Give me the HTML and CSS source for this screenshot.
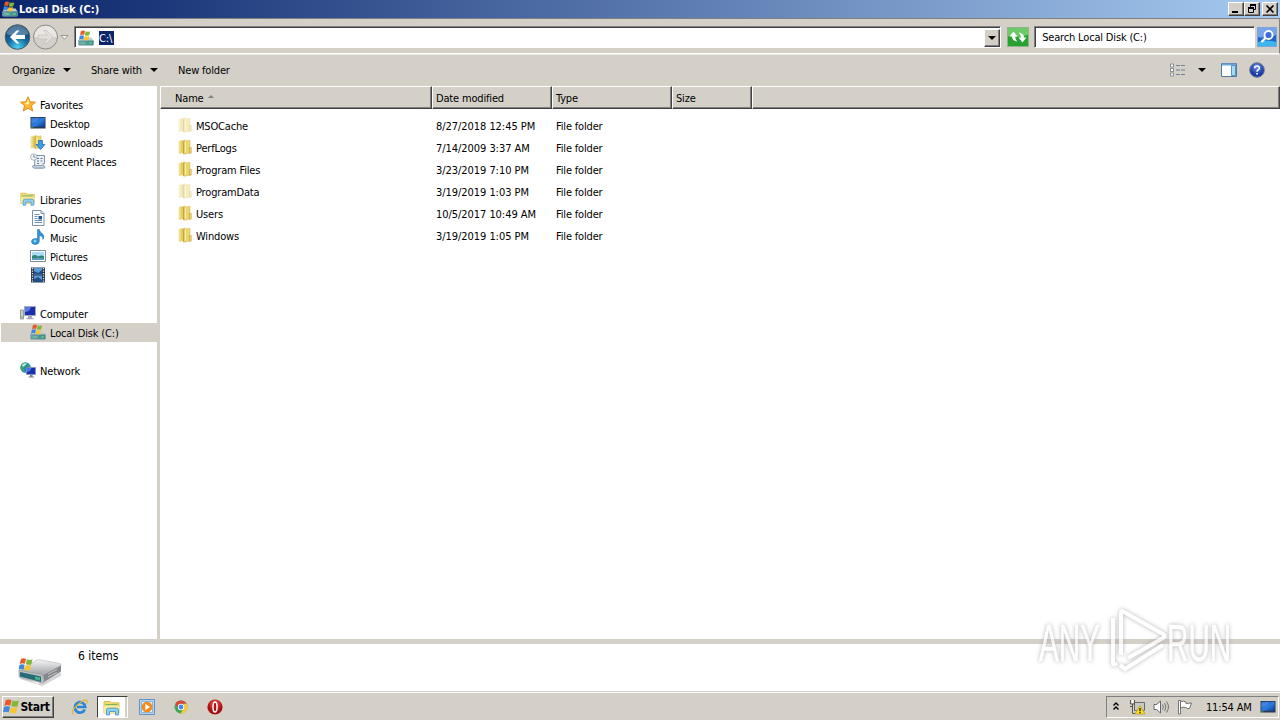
FILE: index.html
```html
<!DOCTYPE html>
<html lang="en">
<head>
    <meta charset="utf-8">
    <title>Local Disk (C:)</title>
    <link rel="stylesheet" href="styles.css">
</head>
<body>
    <svg class="defs" width="0" height="0">
        <defs>
            <linearGradient id="gold" x2="1"><stop offset="0" stop-color="#fbf3b0"/><stop offset=".45" stop-color="#e2c858"/><stop offset="1" stop-color="#f3e084"/></linearGradient>
            <linearGradient id="screen" x2="1" y2="1"><stop offset="0" stop-color="#0b3fa8"/><stop offset=".5" stop-color="#2f7fe0"/><stop offset="1" stop-color="#0a3a94"/></linearGradient>
            <linearGradient id="teal" x2="1"><stop offset="0" stop-color="#6a9fb0"/><stop offset="1" stop-color="#3a8f80"/></linearGradient>
            <linearGradient id="metal" y2="1" x2="0"><stop offset="0" stop-color="#f6f6f6"/><stop offset="1" stop-color="#a0a2a4"/></linearGradient>
            <radialGradient id="blueBall" cy=".95" r=".9"><stop offset="0" stop-color="#4fd8f4"/><stop offset=".5" stop-color="#12689f"/><stop offset="1" stop-color="#0c3e6c"/></radialGradient>
            <radialGradient id="helpBall" cy=".3"><stop offset="0" stop-color="#6b96ea"/><stop offset="1" stop-color="#1c3aa4"/></radialGradient>
            <radialGradient id="redBall" cy=".3"><stop offset="0" stop-color="#f05a4c"/><stop offset="1" stop-color="#a80c10"/></radialGradient>
        </defs>
        <symbol id="flag" viewBox="0 0 16 16">
            <path d="M2.600 2.200Q5 .6 8 2L6.800 7.300Q4.200 6 1.300 7.400z" fill="#e8592a"/>
            <path d="M8.900 2.400Q12 3.800 15 2.300L13.700 7.700Q11 9 7.800 7.600z" fill="#7fb93a"/>
            <path d="M1.100 8.300Q4 7 6.600 8.300L5.400 13.400Q3 12.200 0 13.500z" fill="#3f86dc"/>
            <path d="M7.500 8.600Q10.500 10 13.500 8.600L12.200 13.900Q9.500 15 6.300 13.600z" fill="#f8c52c"/>
        </symbol>
        <symbol id="drive" viewBox="0 0 16 16">
            <path d="M.5 10.500l2-3h11l2 3z" fill="#c3cdd0"/>
            <path d="M.5 10.500h15v4q0 .8-.8.8H1.300q-.8 0-.8-.8z" fill="url(#teal)" stroke="#7f9fa8" stroke-width=".6"/>
            <path d="M11 13h3M2.500 13h5" stroke="#79d99a"/>
            <use href="#flag" x="1" y="-.5" width="12" height="12"/>
        </symbol>
        <symbol id="folder" viewBox="0 0 14 16">
            <path d="M1 2.500L7 .8v12.500L1 14.500z" fill="url(#gold)" stroke="#dcc468" stroke-width=".5"/>
            <path d="M6 2l6-.5V14l-6 1.300z" fill="#ecd570" stroke="#d0b54a" stroke-width=".5"/>
            <path d="M5.500 2.200v13" stroke="#c4a440"/>
            <path d="M7.500 2.500v11" stroke="#fbf2a8"/>
            <path d="M11.500 8.500h1.800V14l-1.800.5z" fill="#f0db80" stroke="#b8952e" stroke-width=".5"/>
        </symbol>
        <symbol id="monitor" viewBox="0 0 16 14">
            <path d="M.5 1h15v11.500H.5z" fill="#29394f"/>
            <path d="M1.300 1.800h13.400v9H1.300z" fill="url(#screen)"/>
            <path d="M1.300 2l8-.2Q7 7 1.300 7z" fill="#5ba0ee" opacity=".55"/>
            <path d="M1 12h2.500" stroke="#58b848"/>
        </symbol>
        <symbol id="library" viewBox="0 0 18 16">
            <path d="M1 3V1.500h6l1.500 1.300H16V13H1z" fill="#f2dd72" stroke="#d0b040" stroke-width=".8"/>
            <path d="M2.500 4.500h12" stroke="#6fb56c"/>
            <path d="M1 6h15.500v7H1z" fill="#f8eaa0"/>
            <path d="M3.500 15V10Q3.500 8.200 5.500 8.200h8Q15.500 8.200 15.500 10v5h-3v-3.500h-6V15z" fill="#8fd0ef" stroke="#3f91c4" stroke-width=".8"/>
        </symbol>
    </svg>

    <header class="titlebar">
        <svg class="i16" viewBox="0 0 16 16"><use href="#drive"/></svg>
        <h1>Local Disk (C:)</h1>
        <div class="window-buttons">
            <button class="btn3d"><svg viewBox="0 0 14 12"><path d="M3 8h6v2H3z"/></svg></button>
            <button class="btn3d"><svg viewBox="0 0 14 12"><path d="M5 1h6v2H5zM3 4h6v2H3z"/><path d="M5.500 4V1.500h5v5H9M3.500 4.500h5v5h-5z" fill="none" stroke="#000"/></svg></button>
            <button class="btn3d close"><svg viewBox="0 0 14 12"><path d="M3.500 2.500l7 7M10.500 2.500l-7 7" stroke="#000" stroke-width="1.700"/></svg></button>
        </div>
    </header>

    <nav class="addressbar">
        <svg class="nav-buttons" width="70" height="28" viewBox="0 0 70 28">
            <circle cx="17.500" cy="14" r="12.300" fill="url(#blueBall)" stroke="#4b5f6c"/>
            <path d="M6.500 11a11.300 11.300 0 0 1 22 0Q17 15 6.500 11z" fill="#fff" opacity=".28"/>
            <path d="M10 14l6.500-6.500h3L15.500 12H25v4h-9.500l4 4.500h-3z" fill="#fff"/>
            <circle cx="45.500" cy="14" r="12" fill="#d3d0cb" stroke="#8e8c89"/>
            <path d="M34.500 14a11 11 0 0 1 22 0z" fill="#e9e7e4"/>
            <path d="M53 14l-6.500-6.500h-3l4 4.500H38v4h9.500l-4 4.500h3z" fill="#e2dfdb" stroke="#c0bdb8" stroke-width=".6"/>
            <path d="M61 12.500h7l-3.500 3.800z" fill="#f7f5f2" stroke="#88857f" stroke-width=".8"/>
        </svg>
        <div class="field path">
            <svg class="i16" viewBox="0 0 16 16"><use href="#drive"/></svg>
            <span class="selected">C:\</span>
            <button class="btn3d dropdown"><i class="caret"></i></button>
        </div>
        <svg class="refresh" width="22" height="20" viewBox="0 0 22 20">
            <path d="M.5.5h21v19H.5z" fill="#27a12f" stroke="#8fb48c"/>
            <path d="M1 1h20v7Q11 11 1 9z" fill="#6ccb66"/>
            <path d="M2.500 9.500L6.500 4.500l4 5H8.200q0 3 2 5-5-.7-5.200-5z" fill="#fff"/>
            <path d="M19.500 10.500l-4 5-4-5h2.300q0-3-2-5 5 .7 5.200 5z" fill="#fff"/>
        </svg>
        <div class="field search">Search Local Disk (C:)</div>
        <svg class="find" width="20" height="20" viewBox="0 0 20 20">
            <path d="M.5.5h19v19H.5z" fill="#2064cf" stroke="#7da4da"/>
            <path d="M1 1h18v7Q10 12 1 10z" fill="#76a3ea"/>
            <path d="M1 15q9-3 18 0v4H1z" fill="#3cb7ee"/>
            <circle cx="11.500" cy="8" r="4" fill="#3a6fd8" stroke="#fff" stroke-width="1.800"/>
            <path d="M8.500 11L4.500 15" stroke="#fff" stroke-width="2.400"/>
        </svg>
    </nav>

    <div class="toolbar">
        <span class="t-organize">Organize</span><i class="caret"></i>
        <span class="t-share">Share with</span><i class="caret"></i>
        <span class="t-new">New folder</span>
        <div class="view-tools">
            <svg width="16" height="14" viewBox="0 0 16 14"><path d="M.5 1h3v3h-3zM.5 5.500h3v3h-3zM.5 10h3v3h-3z" fill="#fff" stroke="#7b8490" stroke-width=".9"/><path d="M6 2.500h4M11 2.500h4M6 7h4M11 7h4M6 11.500h4M11 11.500h4" stroke="#737f94"/></svg>
            <i class="caret"></i>
            <svg class="pane" width="16" height="14" viewBox="0 0 16 14"><path d="M.5.500h15v13H.5z" fill="#fff" stroke="#4c7ba5"/><path d="M1 1.500h14" stroke="#6aa6d8" stroke-width="2"/><path d="M10.500 2.500h4v10h-4z" fill="#a9dcf2" stroke="#5592bd"/></svg>
            <svg width="16" height="16" viewBox="0 0 16 16"><circle cx="8" cy="8" r="7.300" fill="url(#helpBall)" stroke="#6d7790"/><path d="M5.600 6.200Q5.700 4 8 4t2.400 2Q10.400 7.300 9 8 8 8.500 8 9.700" fill="none" stroke="#fff" stroke-width="1.600"/><path d="M7.200 10.900h1.700v1.600H7.200z" fill="#fff"/></svg>
        </div>
    </div>

    <main class="content">
        <aside class="tree">
            <ul>
                <li class="root"><svg class="i16" viewBox="0 0 16 16"><path d="M8 .8l2.100 5 5.400.4-4.100 3.500 1.300 5.300L8 12.100 3.300 15l1.300-5.300L.5 6.200l5.400-.4z" fill="#fcb92e" stroke="#e58a1c"/><path d="M8 3l1.200 3.700L8 9 4 7.200l2.700-.4z" fill="#fff0a8"/></svg>Favorites</li>
                <li><svg class="i16" viewBox="0 0 16 14"><use href="#monitor"/></svg>Desktop</li>
                <li><svg class="i16" viewBox="0 0 16 16"><use href="#folder" x="0" width="13" height="16"/><path d="M8.500 6.500h4v4H15l-4.500 5-4.500-5h2.500z" fill="#3ba0e6" stroke="#1c66a8" stroke-width=".7"/></svg>Downloads</li>
                <li><svg class="i16" viewBox="0 0 16 16"><path d="M5 2.500h9.500v8H13v4.500H4.500z" fill="#eef2f6" stroke="#7f93a8"/><path d="M3 12.500h9.500q2.500 0 2.500 2.500H4q-2.500-.5-1-2.500z" fill="#c8d4df" stroke="#7f93a8" stroke-width=".8"/><path d="M7 5.500h2M10.500 5.500h2M7 8h2M10.500 8h2M7 10.500h2" stroke="#56789c"/><circle cx="3.800" cy="4" r="3.200" fill="#f4f6f8" stroke="#97a3b0" stroke-width=".8"/><path d="M3.800 2v2.200h1.700" fill="none" stroke="#4c647e" stroke-width=".8"/></svg>Recent Places</li>
            </ul>
            <ul>
                <li class="root"><svg class="i16" viewBox="0 0 18 16"><use href="#library"/></svg>Libraries</li>
                <li><svg class="i16" viewBox="0 0 16 16"><path d="M2.500.5h8.500l3 3v12H2.500z" fill="#fff" stroke="#7c92ab"/><path d="M11 .5v3h3" fill="#dbe5ef" stroke="#7c92ab"/><path d="M4.500 4.500h5M4.500 6.500h3M4.500 8.500h3M4.500 10.500h7.500M4.500 12.500h7.500" stroke="#6d8fb7"/><path d="M8.500 6h3.500v3.500H8.500z" fill="#25588f"/></svg>Documents</li>
                <li><svg class="i16" viewBox="0 0 16 16"><path d="M7.500.5h1.800q.4 2.500 3 4.200 2.700 2 .7 5.800.2-3.500-3.700-4V12q-.1 3.300-3.800 3.500-4-.2-4-2.800 0-3 4-3.200l2 .3z" fill="#2f93d8" stroke="#1d69ad" stroke-width=".5"/><circle cx="5" cy="12" r="1.500" fill="#8dd3f7"/></svg>Music</li>
                <li><svg class="i16" viewBox="0 0 16 16"><path d="M.5 2.500h15v11H.5z" fill="#fff" stroke="#7c8c9c"/><path d="M2 4h12v8H2z" fill="#a8dcf4"/><path d="M2 8q3-2 6 .5 3-1.500 6-.5v4H2z" fill="#2c8575"/><path d="M2 10.500q6-1.500 12 0V12H2z" fill="#5b9bc4"/></svg>Pictures</li>
                <li><svg class="i16" viewBox="0 0 16 16"><path d="M1 .5h14v15H1z" fill="#27344a"/><path d="M4 1h8v6.500H4zM4 8.500h8V15H4z" fill="#5b9bd4"/><path d="M4 4l4 2 4-3v4H4zM4 12l4-2 4 3v2H4z" fill="#1f4d88"/><path d="M2.500 1v15M13.500 1v15" stroke="#dbe3ec" stroke-width="1.300" stroke-dasharray="1.300 1.200"/></svg>Videos</li>
            </ul>
            <ul>
                <li class="root"><svg class="i16" viewBox="0 0 16 16"><path d="M.5 5h3v9h-3z" fill="#c8d3ce" stroke="#7d8b8a" stroke-width=".8"/><path d="M1 12h2" stroke="#52c043"/><path d="M4.500 1.500h11v9h-11z" fill="#1b2fae" stroke="#a2a8b8"/><path d="M5 2h6q-1 5-6 5z" fill="#5a78e4"/><path d="M8 11h4v2H8zM6.500 13h7v1.300h-7z" fill="#a4a9b3"/></svg>Computer</li>
                <li class="current"><svg class="i16" viewBox="0 0 16 16"><use href="#drive"/></svg>Local Disk (C:)</li>
            </ul>
            <ul>
                <li class="root"><svg class="i16" viewBox="0 0 16 16"><circle cx="5.500" cy="5.500" r="5.200" fill="#2488c4"/><path d="M2 2q3-2 5-.5L5 5 3 6l2 4Q1 9 .5 6zM8 2l2 3-3 1z" fill="#3fa558"/><path d="M2 3q2-2.500 5-1.500L3 5z" fill="#c6efe0"/><path d="M6.500 5.500h9v7h-9z" fill="#1730b4" stroke="#8792b4" stroke-width=".8"/><path d="M7 6h4.500q-1 4-4.500 4z" fill="#4f72e6"/><path d="M10 13h2.500v1.500H14v1H8.500v-1H10z" fill="#7c8498"/></svg>Network</li>
            </ul>
        </aside>

        <section class="list">
            <div class="row head">
                <div>Name <i class="sort"></i></div><div>Date modified</div><div>Type</div><div>Size</div><div></div>
            </div>
            <div class="row hidden"><div><svg viewBox="0 0 14 16"><use href="#folder"/></svg>MSOCache</div><div class="date">8/27/2018 12:45 PM</div><div>File folder</div></div>
            <div class="row"><div><svg viewBox="0 0 14 16"><use href="#folder"/></svg>PerfLogs</div><div class="date">7/14/2009 3:37 AM</div><div>File folder</div></div>
            <div class="row"><div><svg viewBox="0 0 14 16"><use href="#folder"/></svg>Program Files</div><div class="date">3/23/2019 7:10 PM</div><div>File folder</div></div>
            <div class="row hidden"><div><svg viewBox="0 0 14 16"><use href="#folder"/></svg>ProgramData</div><div class="date">3/19/2019 1:03 PM</div><div>File folder</div></div>
            <div class="row"><div><svg viewBox="0 0 14 16"><use href="#folder"/></svg>Users</div><div class="date">10/5/2017 10:49 AM</div><div>File folder</div></div>
            <div class="row"><div><svg viewBox="0 0 14 16"><use href="#folder"/></svg>Windows</div><div class="date">3/19/2019 1:05 PM</div><div>File folder</div></div>
        </section>
    </main>

    <div class="details">
        <svg width="46" height="32" viewBox="0 0 46 32">
            <path d="M3 20l18 8 23-12v4L25 30 3 23z" fill="#777" opacity=".3"/>
            <path d="M2 15L19 4.500q2-1 4-.7l20 3.700q1.500.5 1 2L26 19z" fill="url(#metal)" stroke="#b6b8ba" stroke-width=".6"/>
            <path d="M26 19l18-9.500v6L27 26z" fill="#85888a"/>
            <path d="M2 14l24 5 1 7q-1 1.200-3 .8L3 21.500q-1-.5-1-1.500z" fill="#b9bfc1" stroke="#909698" stroke-width=".6"/>
            <path d="M3 16l21 4.500V26L3 20.500z" fill="#286b78"/>
            <path d="M18 20.500l5 1v3L18 23.300z" fill="#3fb98c"/>
            <path d="M31 18l9-4.500M31 21l9-4.500" stroke="#c4c6c7"/>
            <use href="#flag" x="1.500" y="1" width="15" height="15"/>
        </svg>
        <span>6 items</span>
    </div>

    <footer class="taskbar">
        <button class="btn3d start"><svg width="17" height="17" viewBox="0 0 16 16"><use href="#flag"/></svg><span>Start</span></button>
        <svg class="i16 ie" viewBox="0 0 16 16"><path d="M12.800 10.500A5.200 5.200 0 1 1 13.200 8H5" fill="none" stroke="#2a86d8" stroke-width="2.700"/><path d="M1.500 15Q-1.500 12.500 5 6.500 12-.5 15 1.500q1 1-.7 3.500" fill="none" stroke="#e3b52e" stroke-width="1.200"/></svg>
        <div class="task"><svg width="18" height="16" viewBox="0 0 18 16"><use href="#library"/></svg></div>
        <svg class="i16 wmp" viewBox="0 0 16 16"><path d="M.5.500h15v15H.5z" fill="#b4d3ee" stroke="#5f94c6"/><path d="M2.500 2.500h11v11h-11z" fill="#dfecf7" stroke="#8db5d9"/><circle cx="8" cy="8" r="5.300" fill="#f58a1d"/><path d="M6.300 4.800L11 8l-4.700 3.200z" fill="#fff"/></svg>
        <svg class="chrome" width="14" height="14" viewBox="0 0 14 14"><circle cx="7" cy="7" r="6.500" fill="#3fa757"/><path d="M1.400 3.700A6.500 6.500 0 0 1 12.700 3.800H7L4.200 8.600z" fill="#dc4437"/><path d="M12.700 3.800A6.500 6.500 0 0 1 6.500 13.500L9.800 8.600 9.500 3.800z" fill="#fbc935"/><circle cx="7" cy="7" r="3.200" fill="#fff"/><circle cx="7" cy="7" r="2.400" fill="#4587ee"/></svg>
        <svg class="i16 opera" viewBox="0 0 16 16"><circle cx="8" cy="8" r="7.600" fill="url(#redBall)"/><ellipse cx="8" cy="8" rx="2" ry="5" fill="#b41014" stroke="#fff" stroke-width="1.500"/></svg>

        <div class="tray">
            <svg width="8" height="10" viewBox="0 0 8 10"><path d="M1.500 3.500L4 1l2.500 2.500M1.500 7.500L4 5l2.500 2.500" fill="none" stroke="#000" stroke-width="1.400"/></svg>
            <svg class="net" width="17" height="16" viewBox="0 0 17 16"><path d="M5.500 3.500h10v8h-10z" fill="#c7c9c6" stroke="#6a6a66"/><path d="M1.500 1v4h4V1M3.500 5v9.500H8M1 7.500h3" fill="none" stroke="#55554f"/><path d="M2.500 1v3h2V1z" fill="#fff"/><path d="M11 6.500l5 8.500H6z" fill="#ffdf18" stroke="#b59a10" stroke-width=".7"/><path d="M11 9v3.200M11 13v1.200" stroke="#000" stroke-width="1.200"/></svg>
            <svg class="vol" width="17" height="16" viewBox="0 0 17 16"><path d="M1 5.500h2.500L7.500 2v12L3.500 10.500H1z" fill="#fff" stroke="#666"/><path d="M9.500 5.500q1.800 2.500 0 5M11.500 4q3 4 0 8M13.500 2.500q4 5.500 0 11" fill="none" stroke="#73736f"/></svg>
            <svg class="action" width="17" height="16" viewBox="0 0 17 16"><path d="M1.500 1.500h2V15h-2z" fill="#fff" stroke="#676763" stroke-width=".9"/><path d="M3.500 2.500Q6 1.500 9 3v1.500l5.500-.5-2 5.500Q11 10 8.500 8.500 6 7.500 3.500 9z" fill="#fff" stroke="#676763" stroke-width=".9"/></svg>
            <span class="clock">11:54 AM</span>
            <svg class="i16" viewBox="0 0 16 14"><use href="#monitor"/></svg>
        </div>
    </footer>

    <div class="watermark">
        <svg width="220" height="80" viewBox="0 0 220 80">
            <g class="mark">
                <text transform="translate(9 57) scale(.57 1)">ANY</text>
                <path d="M91 51V9q0-3 3-1l39 22q3 2 0 4L98 54M83 14v45q0 3 4 0M90 61l5 4 38-24"/>
                <text transform="translate(137 57) scale(.57 1)">RUN</text>
            </g>
        </svg>
    </div>
</body>
</html>
```
FILE: styles.css
```css
* {box-sizing: border-box;margin: 0;padding: 0;}
body {
    width: 1280px;
    height: 720px;
    overflow: hidden;
    display: flex;
    flex-direction: column;
    background: #d4d0c8;
    color: #000;
    font: 11px/19px "DejaVu Sans Condensed", "DejaVu Sans", sans-serif;
    font-stretch: condensed;
    letter-spacing: -.17px;
    white-space: nowrap;
}
svg {display: block;flex: none;}
ul {list-style: none;}
button {font: inherit;color: #000;}
.defs {position: absolute;}
.i16 {width: 16px;height: 16px;}
.caret {border: 4px solid transparent;border-top-color: #000;border-bottom: 0;flex: none;}
.btn3d {
    display: flex;
    align-items: center;
    justify-content: center;
    background: #d4d0c8;
    border: 1px solid;
    border-color: #fff #404040 #404040 #fff;
    box-shadow: inset -1px -1px #808080;
}

.titlebar {height: 18px;display: flex;align-items: center;padding: 0 2px;background: linear-gradient(90deg, #0a246a, #a6caf0);}
.titlebar h1 {color: #fff;font-size: 11px;line-height: 18px;padding-top: 2px;margin-left: 1px;letter-spacing: 0;}
.window-buttons {display: flex;margin-left: auto;}
.window-buttons .btn3d {width: 16px;height: 14px;}
.window-buttons svg {width: 14px;height: 12px;}
.window-buttons .close {margin-left: 2px;}

.addressbar {
    height: 36px;
    display: flex;
    align-items: center;
    padding: 2px 2px 0 0;
    border-top: 1px solid #808080;
    border-bottom: 1px solid #fff;
    border-right: 1px solid #808080;
}
.field {
    display: flex;
    align-items: center;
    height: 22px;
    background: #fff;
    border: 1px solid;
    border-color: #808080 #fff #fff #808080;
    box-shadow: inset 1px 1px #404040;
}
.path {width: 928px;margin-left: 4px;padding: 1px 0 0 3px;}
.selected {background: #0a246a;color: #fff;height: 14px;line-height: 15px;margin: 1px 0 0 5px;padding-right: 2px;}
.dropdown {width: 16px;height: 18px;margin-left: auto;}
.refresh {margin-left: 6px;}
.search {width: 221px;margin-left: 5px;padding-left: 7px;}
.find {margin-left: 2px;}

.toolbar {height: 32px;display: flex;align-items: center;padding: 0 15px 2px 12px;border-top: 1px solid #eae8e3;}
.toolbar span {padding-top: 2px;}
.t-organize {width: 51px;}
.t-share {width: 59px;margin-left: 20px;}
.t-new {margin-left: 20px;}
.view-tools {display: flex;align-items: center;margin-left: auto;}
.view-tools .caret {margin-left: 12px;}
.view-tools .pane {margin: 0 12px 0 15px;}

.content {height: 553px;display: flex;background: #fff;}
.tree {width: 160px;padding-top: 9px;border-right: 3px solid #d4d0c8;}
.tree ul {margin-bottom: 19px;}
.tree li {height: 19px;line-height: 22px;display: flex;gap: 4px;padding-left: 30px;}
.tree li.root {padding-left: 20px;}
.tree li.current {background: #d4d0c8;margin-left: 1px;padding-left: 29px;}
.tree li svg {margin-top: 1px;}

.list {flex: 1;}
.row {display: grid;grid-template-columns: 272px 120px 120px 80px 1fr;height: 22px;line-height: 24px;}
.row div {height: 22px;padding-left: 4px;}
.row div:first-child {display: flex;padding-left: 18px;}
.row .date {letter-spacing: -.05px;}
.row svg {width: 14px;height: 16px;margin: 2px 4px 0 0;}
.hidden svg {opacity: .45;}
.head {margin-bottom: 7px;}
.row.head div {
    height: 23px;
    padding-left: 3px;
    line-height: 23px;
    background: #d4d0c8;
    border: 1px solid;
    border-color: #fff #404040 #404040 #fff;
    box-shadow: inset -1px -1px #808080;
}
.row.head div:first-child {padding-left: 14px;}
.sort {height: 3px;border: 3px solid transparent;border-bottom-color: #808080;border-top: 0;margin: 8px 0 0 4px;}

.details {height: 53px;display: flex;background: #fff;border-top: 5px solid #d4d0c8;padding: 0 0 0 17px;}
.details svg {margin-top: 12px;}
.details span {margin-left: 15px;line-height: 24px;font-size: 12px;letter-spacing: 0;}

.taskbar {flex: 1;display: flex;align-items: center;padding: 2px 0 2px 2px;border-top: 1px solid #fff;box-shadow: 0 -1px #d4d0c8;}
.start {width: 52px;height: 22px;font-weight: bold;font-size: 12px;letter-spacing: -.3px;padding-right: 3px;}
.start span {padding-top: 2px;}
.ie {margin-left: 18px;}
.task {
    width: 31px;
    height: 22px;
    margin-left: 9px;
    padding: 3px 0 0 5px;
    background: #fff;
    border: 1px solid;
    border-color: #404040 #fff #fff #404040;
    box-shadow: inset -2px 0 #d4d0c8;
}
.wmp {margin-left: 11px;}
.chrome {margin-left: 19px;}
.opera {margin-left: 19px;}
.tray {
    width: 173px;
    height: 22px;
    margin-left: auto;
    margin-right: 1px;
    padding-left: 5px;
    display: flex;
    align-items: center;
    border: 1px solid;
    border-color: #808080 #fff #fff #808080;
}
.net {margin-left: 9px;}
.vol {margin-left: 7px;}
.action {margin-left: 7px;}
.clock {width: 47px;margin: 1px 7px 0 12px;}

/* logo floats over the list and the details pane */
.watermark {position: absolute;left: 1030px;top: 604px;}
.mark {fill: #fff;stroke: #fff;stroke-width: .5;opacity: .75;filter: drop-shadow(0 0 2px #999);}
.mark text {font: 52px "Liberation Sans", sans-serif;letter-spacing: 0;}
.mark path {fill: none;stroke-width: 4;}
```
